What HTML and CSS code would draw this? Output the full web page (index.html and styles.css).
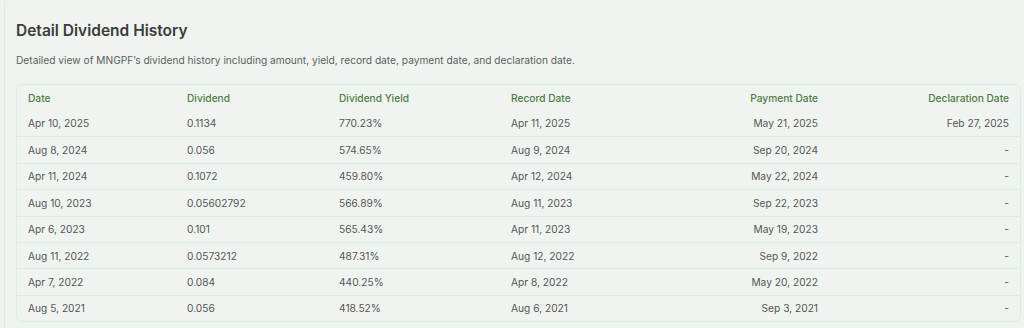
FILE: index.html
```html
<!DOCTYPE html>
<html lang="en">
<head>
<meta charset="utf-8">
<title>Detail Dividend History</title>
<link rel="stylesheet" href="styles.css">
</head>
<body>
<section class="card">
  <h2 class="title">Detail Dividend History</h2>
  <p class="desc">Detailed view of MNGPF’s dividend history including amount, yield, record date, payment date, and declaration date.</p>
  <div class="table">
    <div class="row head">
      <div class="c">Date</div><div class="c">Dividend</div><div class="c">Dividend Yield</div><div class="c">Record Date</div><div class="c r">Payment Date</div><div class="c r">Declaration Date</div>
    </div>
    <div class="row first">
      <div class="c">Apr 10, 2025</div><div class="c">0.1134</div><div class="c">770.23%</div><div class="c">Apr 11, 2025</div><div class="c r">May 21, 2025</div><div class="c r">Feb 27, 2025</div>
    </div>
    <div class="row sep">
      <div class="c">Aug 8, 2024</div><div class="c">0.056</div><div class="c">574.65%</div><div class="c">Aug 9, 2024</div><div class="c r">Sep 20, 2024</div><div class="c r">-</div>
    </div>
    <div class="row sep">
      <div class="c">Apr 11, 2024</div><div class="c">0.1072</div><div class="c">459.80%</div><div class="c">Apr 12, 2024</div><div class="c r">May 22, 2024</div><div class="c r">-</div>
    </div>
    <div class="row sep">
      <div class="c">Aug 10, 2023</div><div class="c">0.05602792</div><div class="c">566.89%</div><div class="c">Aug 11, 2023</div><div class="c r">Sep 22, 2023</div><div class="c r">-</div>
    </div>
    <div class="row sep">
      <div class="c">Apr 6, 2023</div><div class="c">0.101</div><div class="c">565.43%</div><div class="c">Apr 11, 2023</div><div class="c r">May 19, 2023</div><div class="c r">-</div>
    </div>
    <div class="row sep">
      <div class="c">Aug 11, 2022</div><div class="c">0.0573212</div><div class="c">487.31%</div><div class="c">Aug 12, 2022</div><div class="c r">Sep 9, 2022</div><div class="c r">-</div>
    </div>
    <div class="row sep">
      <div class="c">Apr 7, 2022</div><div class="c">0.084</div><div class="c">440.25%</div><div class="c">Apr 8, 2022</div><div class="c r">May 20, 2022</div><div class="c r">-</div>
    </div>
    <div class="row sep">
      <div class="c">Aug 5, 2021</div><div class="c">0.056</div><div class="c">418.52%</div><div class="c">Aug 6, 2021</div><div class="c r">Sep 3, 2021</div><div class="c r">-</div>
    </div>
  </div>
</section>
</body>
</html>
```
FILE: styles.css
```css
html, body {
  margin: 0;
  padding: 0;
  background: #f0f4f1;
  overflow: hidden;
}
body {
  font-family: Inter, "Noto Sans", sans-serif;
  color: #555;
}
.card {
  margin: -6px -20px 0 4px;
  padding: 26px 22px 20px 11px;
  border: 1px solid #e3e9e4;
  border-radius: 8px;
  background: #f0f4f1;
}
.title {
  margin: 0;
  font-size: 15.5px;
  line-height: 20px;
  font-weight: 600;
  color: #3b3b3b;
}
.desc {
  margin: 11.5px 0 0;
  font-size: 10.2px;
  line-height: 15px;
  color: #5a5f5b;
}
.table {
  margin-top: 16.5px;
  border: 1px solid #e3e9e4;
  border-radius: 6px;
  width: 1003px;
}
.row {
  display: grid;
  grid-template-columns: 159px 152px 172px 165px 164px 191px;
  height: 25.4px;
  align-items: center;
  font-size: 10.2px;
  color: #555;
}
.row.first {
  height: 26.4px;
}
.row.sep {
  border-top: 1px solid #e3e9e4;
}
.head {
  height: 25px;
  color: #4f7b45;
  font-weight: 500;
}
.c {
  padding: 0 11px;
  white-space: nowrap;
}
.c.r {
  text-align: right;
}
```
